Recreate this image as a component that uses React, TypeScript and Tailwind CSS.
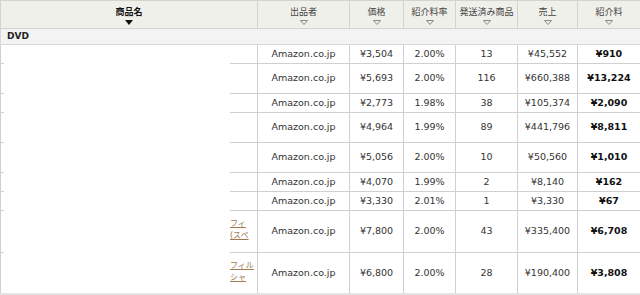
import React from "react";

type Row = {
  h: string;
  price: string;
  rate: string;
  qty: string;
  sales: string;
  fee: string;
  link?: [string, string];
};

const rows: Row[] = [
  { h: "h-[19px]", price: "¥3,504", rate: "2.00%", qty: "13", sales: "¥45,552", fee: "¥910" },
  { h: "h-[30px]", price: "¥5,693", rate: "2.00%", qty: "116", sales: "¥660,388", fee: "¥13,224" },
  { h: "h-[19px]", price: "¥2,773", rate: "1.98%", qty: "38", sales: "¥105,374", fee: "¥2,090" },
  { h: "h-[30px]", price: "¥4,964", rate: "1.99%", qty: "89", sales: "¥441,796", fee: "¥8,811" },
  { h: "h-[30px]", price: "¥5,056", rate: "2.00%", qty: "10", sales: "¥50,560", fee: "¥1,010" },
  { h: "h-[19px]", price: "¥4,070", rate: "1.99%", qty: "2", sales: "¥8,140", fee: "¥162" },
  { h: "h-[19px]", price: "¥3,330", rate: "2.01%", qty: "1", sales: "¥3,330", fee: "¥67" },
  { h: "h-[42px]", price: "¥7,800", rate: "2.00%", qty: "43", sales: "¥335,400", fee: "¥6,708", link: ["フィ", "(スペ"] },
  { h: "h-[41px]", price: "¥6,800", rate: "2.00%", qty: "28", sales: "¥190,400", fee: "¥3,808", link: ["フィル", "シャ"] },
];

const headers = ["出品者", "価格", "紹介料率", "発送済み商品", "売上", "紹介料"];

function Hollow() {
  return (
    <svg width="8" height="5" viewBox="0 0 8 5" className="mx-auto mt-[3px] block">
      <path d="M0.5 0.5 L7.5 0.5 L4 4.5 Z" fill="none" stroke="#888" strokeWidth="1" />
    </svg>
  );
}

function Filled() {
  return (
    <svg width="8" height="5" viewBox="0 0 8 5" className="mx-auto mt-[3px] block">
      <path d="M0 0 L8 0 L4 5 Z" fill="#111" />
    </svg>
  );
}

export default function App() {
  const font = { fontFamily: '"DejaVu Sans", Verdana, "Noto Sans CJK JP", sans-serif' };
  return (
    <div className="w-[640px] h-[295px] bg-white overflow-hidden relative" style={font}>
      <table className="table-fixed border-collapse w-[640px] text-[9.5px] text-[#333]">
        <colgroup>
          <col className="w-[257px]" />
          <col className="w-[92px]" />
          <col className="w-[54px]" />
          <col className="w-[52px]" />
          <col className="w-[62px]" />
          <col className="w-[60px]" />
          <col className="w-[63px]" />
        </colgroup>
        <thead>
          <tr className="h-[28px] bg-[#f0f0ea]">
            <th className="border border-[#d4d4cc] text-center align-middle font-bold text-[9px] text-[#111] pt-[2px]">
              <div className="leading-[10px]">商品名</div>
              <Filled />
            </th>
            {headers.map((t) => (
              <th key={t} className="border border-[#d4d4cc] text-center align-middle font-normal text-[9px] text-[#444] pt-[2px]">
                <div className="leading-[10px]">{t}</div>
                <Hollow />
              </th>
            ))}
          </tr>
        </thead>
        <tbody>
          <tr className="h-[16px] bg-[#f3f3f3]">
            <td colSpan={7} className="border border-[#d8d8d8] pl-[6px] text-[9px] font-bold text-[#222] align-middle">
              DVD
            </td>
          </tr>
          {rows.map((r, i) => (
            <tr key={i} className={r.h}>
              <td className="border border-[#d0d0d0] overflow-hidden align-middle">
                {r.link ? (
                  <div className="pl-[229px] pb-[3px] leading-[12px] text-[8px] text-[#a07a50] underline whitespace-nowrap">
                    <div>{r.link[0]}</div>
                    <div>{r.link[1]}</div>
                  </div>
                ) : null}
              </td>
              <td className="border border-[#d0d0d0] text-center align-middle">Amazon.co.jp</td>
              <td className="border border-[#d0d0d0] text-center align-middle">{r.price}</td>
              <td className="border border-[#d0d0d0] text-center align-middle">{r.rate}</td>
              <td className="border border-[#d0d0d0] text-center align-middle">{r.qty}</td>
              <td className="border border-[#d0d0d0] text-center align-middle">{r.sales}</td>
              <td className="border border-[#d0d0d0] text-center align-middle font-bold text-[#111]">{r.fee}</td>
            </tr>
          ))}
        </tbody>
      </table>
      <div className="absolute left-[4px] top-[45px] w-[226px] h-[248px] bg-white" />
      <div className="absolute left-0 top-[293px] w-[640px] h-[2px] bg-[#e4e4e4]" />
    </div>
  );
}
